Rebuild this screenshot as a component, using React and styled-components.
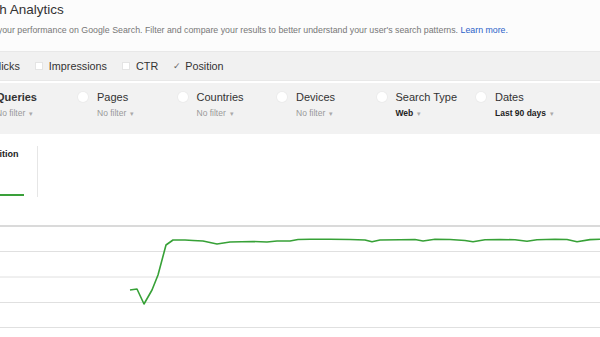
import React from "react";
import styled, { createGlobalStyle } from "styled-components";

const GlobalStyle = createGlobalStyle`
  body {
    margin: 0;
    background: #ffffff;
    font-family: "Liberation Sans", Arial, sans-serif;
    overflow: hidden;
  }
`;

const Page = styled.div`
  width: 600px;
  height: 337px;
  overflow: hidden;
  background: #ffffff;
  display: flex;
  flex-direction: column;
`;

const Header = styled.div`
  margin-left: -36px;
  padding-top: 2px;
  height: 51px;
  box-sizing: border-box;
  background: #fcfcfc;
`;

const Title = styled.h1`
  margin: 0;
  font-size: 13.5px;
  font-weight: normal;
  line-height: 16px;
  color: #333333;
  white-space: nowrap;
`;

const Subtitle = styled.p`
  margin: 6px 0 0;
  font-size: 8.8px;
  line-height: 12px;
  color: #777777;
  white-space: nowrap;

  a {
    color: #2a62c9;
    text-decoration: none;
  }
`;

const MetricBar = styled.div`
  height: 28px;
  display: flex;
  align-items: center;
  gap: 15px;
  background: #f1f1f1;
  border-top: 1px solid #e8e8e8;
  border-bottom: 1px solid #e8e8e8;
  margin-left: -23px;
`;

const Metric = styled.label`
  display: flex;
  align-items: center;
  gap: 6px;
  font-size: 10.8px;
  color: #333333;
  white-space: nowrap;
`;

const Checkbox = styled.span`
  width: 8px;
  height: 8px;
  background: #ffffff;
  border: 1px solid #e4e4e4;
  box-sizing: border-box;
`;

const Check = styled.span`
  width: 8px;
  font-size: 9px;
  color: #666666;
  margin-right: -2px;
`;

const FilterBar = styled.div`
  margin-top: 2px;
  height: 51px;
  display: flex;
  align-items: flex-start;
  padding-top: 8px;
  box-sizing: border-box;
  background: #f2f2f2;
  margin-left: -23px;
`;

const FilterGroup = styled.div`
  width: ${(p) => (p.$first ? "101px" : "99.5px")};
  flex-shrink: 0;
  display: flex;
  align-items: flex-start;
  gap: 9px;
`;

const Radio = styled.span`
  width: 10px;
  height: 10px;
  margin-top: 1px;
  border-radius: 50%;
  background: #ffffff;
  box-shadow: 0 0 0 1px #ececec;
  flex-shrink: 0;
`;

const FilterText = styled.div`
  display: flex;
  flex-direction: column;
  gap: 3px;
  white-space: nowrap;
`;

const FilterLabel = styled.span`
  font-size: 11px;
  line-height: 13px;
  color: #333333;
  font-weight: ${(p) => (p.$active ? "bold" : "normal")};
`;

const FilterValue = styled.span`
  font-size: 8.5px;
  line-height: 12px;
  color: ${(p) => (p.$set ? "#222222" : "#999999")};
  font-weight: ${(p) => (p.$set ? "bold" : "normal")};

  &::after {
    content: "▾";
    margin-left: 4px;
    font-size: 7px;
    font-weight: normal;
    color: #aaaaaa;
  }
`;

const ChartArea = styled.div`
  flex: 1;
  background: #ffffff;
  display: flex;
  flex-direction: column;
`;

const LegendCard = styled.div`
  margin-top: 12px;
  margin-left: -25px;
  width: 63px;
  height: 51px;
  box-sizing: border-box;
  border-right: 1px solid #e6e6e6;
  display: flex;
  flex-direction: column;
  justify-content: space-between;
  padding-top: 3px;
`;

const LegendLabel = styled.span`
  padding-left: 8px;
  font-size: 9px;
  font-weight: bold;
  color: #222222;
`;

const LegendBar = styled.span`
  display: block;
  width: 49px;
  height: 2px;
  background: #3aa03a;
  margin-bottom: 1px;
`;

const Plot = styled.svg`
  display: block;
  margin-top: 2px;
`;

const filters = [
  { label: "Queries", value: "No filter", active: true },
  { label: "Pages", value: "No filter" },
  { label: "Countries", value: "No filter" },
  { label: "Devices", value: "No filter" },
  { label: "Search Type", value: "Web", set: true },
  { label: "Dates", value: "Last 90 days", set: true },
];

const points = [
  [130, 291], [137, 290], [144, 305], [152, 291], [158, 276], [166, 246],
  [173, 241], [185, 241], [193, 241.5], [203, 242], [217, 245], [230, 243],
  [253, 242.5], [267, 243], [277, 242], [290, 242], [298, 240.5], [310, 240.3],
  [330, 240.3], [350, 240.5], [365, 241], [372, 242.7], [380, 241], [400, 240.8],
  [415, 240.5], [423, 242], [435, 240.3], [450, 240.5], [465, 241.5], [473, 242.7],
  [485, 240.8], [500, 240.5], [515, 240.8], [527, 242.3], [537, 240.8], [555, 240.3],
  [567, 240.5], [577, 242.7], [590, 240.6], [600, 240.3],
];

const PLOT_TOP = 200;
const gridLines = [227, 252.5, 278, 303.5, 328.5];

const App = () => {
  const line = points.map(([x, y]) => `${x},${y - PLOT_TOP}`).join(" ");
  return (
    <Page>
      <GlobalStyle />
      <Header>
        <Title>Search Analytics</Title>
        <Subtitle>
          Analyze your performance on Google Search. Filter and compare your
          results to better understand your user's search patterns.{" "}
          <a href="#">Learn more.</a>
        </Subtitle>
      </Header>
      <MetricBar>
        <Metric>
          <Checkbox />
          Clicks
        </Metric>
        <Metric>
          <Checkbox />
          Impressions
        </Metric>
        <Metric>
          <Checkbox />
          CTR
        </Metric>
        <Metric>
          <Check>✓</Check>
          Position
        </Metric>
      </MetricBar>
      <FilterBar>
        {filters.map((f, i) => (
          <FilterGroup key={f.label} $first={i === 0}>
            <Radio />
            <FilterText>
              <FilterLabel $active={f.active}>{f.label}</FilterLabel>
              <FilterValue $set={f.set}>{f.value}</FilterValue>
            </FilterText>
          </FilterGroup>
        ))}
      </FilterBar>
      <ChartArea>
        <LegendCard>
          <LegendLabel>Position</LegendLabel>
          <LegendBar />
        </LegendCard>
        <Plot width="600" height="137" viewBox="0 0 600 137">
          {gridLines.map((y, i) => (
            <line
              key={y}
              x1="0"
              x2="600"
              y1={y - PLOT_TOP}
              y2={y - PLOT_TOP}
              stroke={i === 0 ? "#b5b5b5" : "#e0e0e0"}
              strokeWidth="1"
            />
          ))}
          <polyline
            points={line}
            fill="none"
            stroke="#37a137"
            strokeWidth="1.6"
            strokeLinejoin="round"
          />
        </Plot>
      </ChartArea>
    </Page>
  );
};

export default App;
